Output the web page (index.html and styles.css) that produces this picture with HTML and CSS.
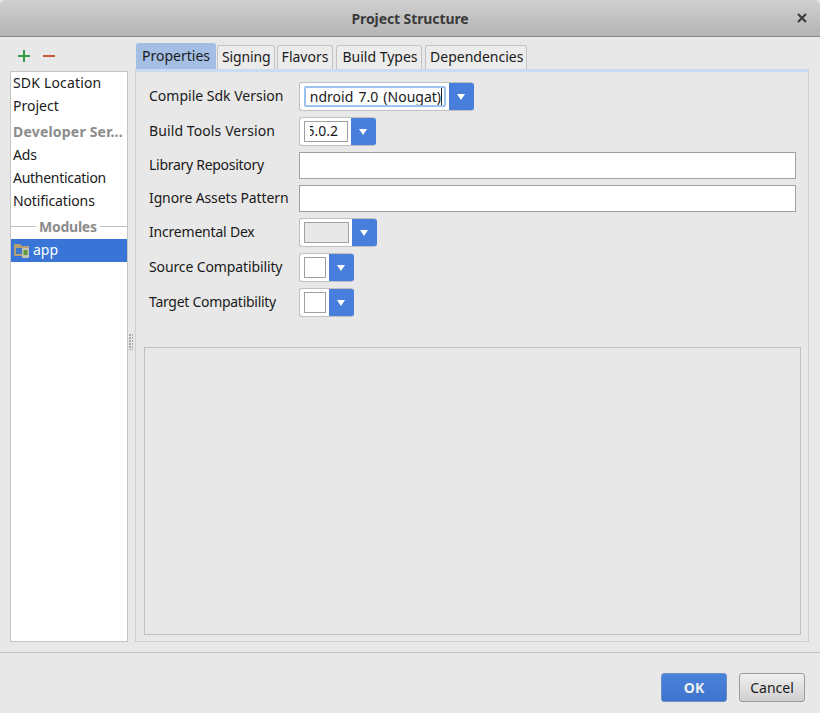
FILE: index.html
```html
<!DOCTYPE html>
<html lang="en">
<head>
<meta charset="utf-8">
<title>Project Structure</title>
<link rel="stylesheet" href="styles.css">
</head>
<body>
<div class="dialog">
  <header class="titlebar">
    <span class="title">Project Structure</span>
    <svg class="close" width="10" height="10" viewBox="0 0 10 10"><path d="M1 1 9 9M9 1 1 9" stroke="#3c3c3c" stroke-width="2.2" fill="none"/></svg>
  </header>
  <main class="content">
    <aside class="sidebar">
      <div class="tools">
        <svg width="12" height="12" viewBox="0 0 12 12"><path d="M6 0v12M0 6h12" stroke="#2c9e4b" stroke-width="2" fill="none"/></svg>
        <svg width="12" height="12" viewBox="0 0 12 12"><path d="M0 6h12" stroke="#c8563f" stroke-width="2" fill="none"/></svg>
      </div>
      <div class="list">
        <div class="item ls-p2">SDK Location</div>
        <div class="item">Project</div>
        <div class="item heading">Developer Ser...</div>
        <div class="item ls-n1">Ads</div>
        <div class="item ls-n3">Authentication</div>
        <div class="item ls-n1">Notifications</div>
        <div class="divider"><span>Modules</span></div>
        <div class="item selected">
          <svg width="16" height="15" viewBox="0 0 16 15"><path d="M0 1h6l2 2h7v10H0z" fill="#b59f74"/><path d="M2 5h9v6H2z" fill="#3f78c8"/><rect x="8" y="5" width="7" height="10" rx="1" fill="#c4c4b4"/><rect x="9.5" y="7" width="4" height="5" fill="#5f9a3c"/></svg>
          <span class="app-name">app</span>
        </div>
      </div>
    </aside>
    <div class="grip"></div>
    <section class="main">
      <nav class="tabs">
        <div class="tab active">Properties</div>
        <div class="tab tab-signing ls-n1">Signing</div>
        <div class="tab tab-flavors">Flavors</div>
        <div class="tab tab-build">Build Types</div>
        <div class="tab tab-deps">Dependencies</div>
      </nav>
      <div class="panel">
        <div class="form">
          <label class="label">Compile Sdk Version</label>
          <div class="combo w1 focus"><div class="inner"><span class="clip">ndroid 7.0 (Nougat)</span><span class="caret"></span></div><div class="arrow"></div></div>
          <label class="label ls-p1">Build Tools Version</label>
          <div class="combo w2"><div class="inner"><span class="clip">5.0.2</span></div><div class="arrow"></div></div>
          <label class="label ls-n3">Library Repository</label>
          <div class="text"></div>
          <label class="label ls-n1">Ignore Assets Pattern</label>
          <div class="text"></div>
          <label class="label ls-n2">Incremental Dex</label>
          <div class="combo w3 disabled"><div class="inner"></div><div class="arrow"></div></div>
          <label class="label ls-n1">Source Compatibility</label>
          <div class="combo w4"><div class="inner"></div><div class="arrow"></div></div>
          <label class="label ls-n3">Target Compatibility</label>
          <div class="combo w4"><div class="inner"></div><div class="arrow"></div></div>
        </div>
        <div class="box"></div>
      </div>
    </section>
  </main>
  <footer class="footer">
    <button class="btn ok">OK</button>
    <button class="btn">Cancel</button>
  </footer>
</div>
</body>
</html>
```
FILE: styles.css
```css
* { box-sizing: border-box; }
html, body { margin: 0; padding: 0; }
body { width: 820px; height: 713px; overflow: hidden; font-family: "Noto Sans", sans-serif; font-size: 14px; color: #1a1a1a; background: #e8e8e8; }
.ls-n3 { letter-spacing: -0.28px; }
.ls-n2 { letter-spacing: -0.2px; }
.ls-n1 { letter-spacing: -0.12px; }
.ls-p1 { letter-spacing: 0.1px; }
.ls-p2 { letter-spacing: 0.17px; }
.dialog { width: 820px; height: 713px; display: flex; flex-direction: column; border-radius: 5px 5px 0 0; overflow: hidden; }
.titlebar { height: 37px; flex: none; display: flex; align-items: center; justify-content: center; position: relative; background: linear-gradient(#d0d0d0, #b4b4b4); border-bottom: 1px solid #8a8a8a; }
.title { font-weight: 700; font-size: 14px; letter-spacing: -0.1px; color: #3a3a3a; }
.close { position: absolute; left: 797px; top: 13px; }
.content { height: 616px; flex: none; display: flex; padding: 6px 11px 10px 10px; border-bottom: 1px solid #c0c0c0; }
.sidebar { width: 118px; flex: none; display: flex; flex-direction: column; }
.tools { height: 28px; flex: none; display: flex; gap: 13px; padding: 7px 0 0 8px; }
.list { flex: 1; background: #fff; border: 1px solid #c4c4c4; }
.item { height: 23px; line-height: 21px; padding-left: 2px; white-space: nowrap; }
.item.heading { margin-top: 3px; font-weight: 700; color: #8c8c8c; letter-spacing: 0.2px; }
.divider { height: 26px; display: flex; align-items: center; font-weight: 700; color: #8c8c8c; letter-spacing: -0.25px; }
.divider::before, .divider::after { content: ""; height: 1px; background: #c0c0c0; }
.divider::before { width: 25px; margin-right: 3px; }
.divider::after { flex: 1; margin-left: 3px; }
.item.selected { background: #3875d7; color: #fff; display: flex; align-items: center; gap: 3px; padding-left: 3px; }
.app-name { margin-bottom: 2px; }
.grip { width: 7px; flex: none; background-image: radial-gradient(circle at 1px 1px, #a8a8a8 1px, transparent 1px); background-size: 3px 3px; background-clip: content-box; background-origin: content-box; padding: 291px 2px 292px 1px; }
.main { flex: 1; min-width: 0; display: flex; flex-direction: column; }
.tabs { height: 26px; flex: none; display: flex; padding-left: 1px; align-items: flex-end; }
.tab { height: 24px; line-height: 22px; padding: 0 3.5px; margin-right: 2.5px; background: #ececec; border: 1px solid #c4c4c4; border-bottom: 0; border-radius: 3px 3px 0 0; }
.tab.active { height: 26px; line-height: 24px; padding: 0 5px; background: #a5bfe4; border-color: #a5bfe4; margin-right: 1px; }
.tab-signing { padding: 0 3px 0 4px; }
.tab-flavors { margin-right: 3.5px; }
.tab-build { padding: 0 3.5px 0 5px; }
.tab-deps { padding: 0 3px 0 4.5px; }
.panel { flex: 1; display: flex; flex-direction: column; border: 1px solid #cfcfcf; border-top: 3px solid #c9dcf2; padding: 10px 7px 6px 8px; }
.form { display: grid; grid-template-columns: 150px 497px; row-gap: 6px; padding-left: 5px; align-items: center; }
.label { line-height: 25px; padding-bottom: 2px; white-space: nowrap; }
.combo { height: 29px; display: flex; border: 1px solid #c0c0c0; border-right: 0; border-radius: 3px; background: #fff; overflow: hidden; justify-self: start; padding: 3px 0 3px 4px; }
.combo .inner { flex: 1; min-width: 0; margin-right: 3px; border: 1px solid #a0a0a0; background: #fff; overflow: hidden; position: relative; }
.clip { position: absolute; left: 5px; right: 9px; top: 0; height: 20px; line-height: 17px; white-space: nowrap; overflow: hidden; display: flex; justify-content: flex-end; }
.combo .arrow { flex: none; width: 25px; margin: -4px 0; background: #487fdc; position: relative; }
.combo .arrow::after { content: ""; position: absolute; left: 8px; top: 12px; border: 4.5px solid transparent; border-top: 6px solid #fff; border-bottom: 0; }
.w1 { width: 175px; } .w2 { width: 77px; } .w3 { width: 78px; } .w4 { width: 55px; }
.focus .inner { border: 2px solid #9cc3ee; border-radius: 2px; }
.focus .clip { left: 4px; right: 3px; word-spacing: 1.5px; }
.caret { position: absolute; right: 2px; top: 0; bottom: 0; width: 1px; background: #222; }
.disabled .inner { background: #e8e8e8; }
.text { height: 27px; width: 497px; background: #fff; border: 1px solid #a0a0a0; }
.box { margin-top: 30px; flex: 1; border: 1px solid #c0c0c0; }
.footer { flex: 1; display: flex; justify-content: flex-end; gap: 12px; padding: 20px 15px 0 0; }
.btn { width: 66px; height: 29px; font: inherit; color: #1a1a1a; border: 1px solid #9c9c9c; border-radius: 3px; background: linear-gradient(#f0f0f0, #cfcfcf); padding: 0; }
.btn.ok { background: linear-gradient(#4a82dc, #3f74cc); border-color: #6c8fc4; color: #f0f0f0; font-weight: 700; }
```
